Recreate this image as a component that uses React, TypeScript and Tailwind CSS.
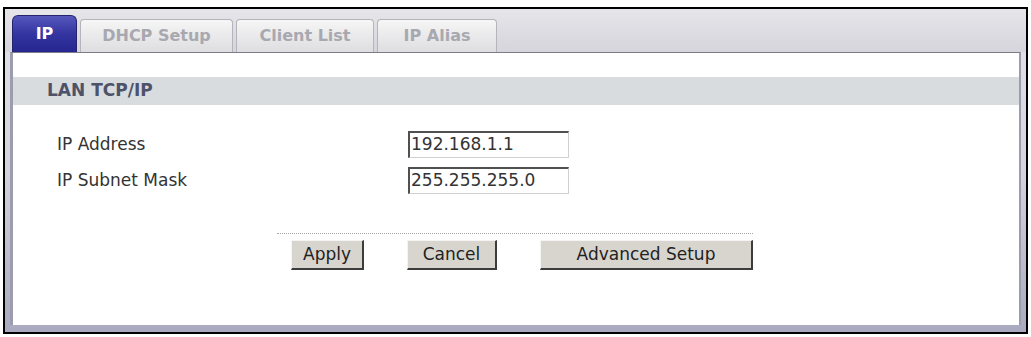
import React from 'react'

const font = { fontFamily: '"DejaVu Sans", Verdana, sans-serif' }

function Tab({ label, active, width }: { label: string; active?: boolean; width: string }) {
  if (active) {
    return (
      <div
        className={`${width} h-[37px] rounded-t-[6px] bg-gradient-to-b from-[#5656bc] via-[#3434a0] to-[#262690] border border-[#24246e] border-b-0 flex items-center justify-center text-white font-bold text-[16px]`}
      >
        {label}
      </div>
    )
  }
  return (
    <div
      className={`${width} h-[33px] rounded-t-[4px] bg-gradient-to-b from-[#f6f6f6] to-[#dedde0] border border-[#b4b4bc] border-b-0 flex items-center justify-center text-[#a8a8b0] font-bold text-[16px]`}
    >
      {label}
    </div>
  )
}

function Field({ label, value }: { label: string; value: string }) {
  return (
    <div className="flex items-center h-[27px]">
      <div className="w-[395px] pl-[44px] text-[17px] text-[#333]">{label}</div>
      <div className="w-[161px] h-[27px] border-t-2 border-l-2 border-t-[#505050] border-l-[#505050] border-r border-b border-r-[#d0d0d0] border-b-[#d0d0d0] bg-white flex items-center pl-[1px] text-[17px] text-[#333]">
        {value}
      </div>
    </div>
  )
}

function Btn({ label, width }: { label: string; width: string }) {
  return (
    <button
      className={`${width} h-[30px] bg-[#d8d5cf] border-t border-l border-t-[#f4f4f4] border-l-[#f4f4f4] border-r-2 border-b-2 border-r-[#3c3c3c] border-b-[#3c3c3c] text-[17px] text-[#222] flex items-center justify-center`}
    >
      {label}
    </button>
  )
}

export default function App() {
  return (
    <div className="w-[1031px] h-[337px] bg-white pt-[7px] pl-[3px]" style={font}>
      <div className="w-[1025px] h-[327px] border-2 border-black bg-gradient-to-b from-[#e2e2e8] via-[#d4d4de] to-[#a9a9c0] flex flex-col">
        <div className="h-[43px] flex items-end pl-[7px] gap-[3px] bg-gradient-to-b from-[#e6e6ea] to-[#d6d4dc]">
          <Tab label="IP" active width="w-[65px]" />
          <Tab label="DHCP Setup" width="w-[153px]" />
          <Tab label="Client List" width="w-[138px]" />
          <Tab label="IP Alias" width="w-[120px]" />
        </div>
        <div className="flex-1 px-[5px] pb-[7px] flex">
          <div className="flex-1 bg-white border-t border-t-[#7c7c84] border-l-[3px] border-l-[#9c9cac] border-r-2 border-r-[#9c9cac] flex flex-col">
            <div className="h-[24px]" />
            <div className="h-[28px] bg-[#d8dcdf] flex items-center pl-[34px] text-[17px] font-bold text-[#4e5268]">
              LAN TCP/IP
            </div>
            <div className="mt-[26px] flex flex-col gap-[9px]">
              <Field label="IP Address" value="192.168.1.1" />
              <Field label="IP Subnet Mask" value="255.255.255.0" />
            </div>
            <div className="mt-[39px] ml-[264px] w-[476px] border-t border-dotted border-t-[#a8a8a8]" />
            <div className="mt-[6px] ml-[278px] flex gap-[43px]">
              <Btn label="Apply" width="w-[73px]" />
              <Btn label="Cancel" width="w-[90px]" />
              <Btn label="Advanced Setup" width="w-[213px]" />
            </div>
          </div>
        </div>
      </div>
    </div>
  )
}
